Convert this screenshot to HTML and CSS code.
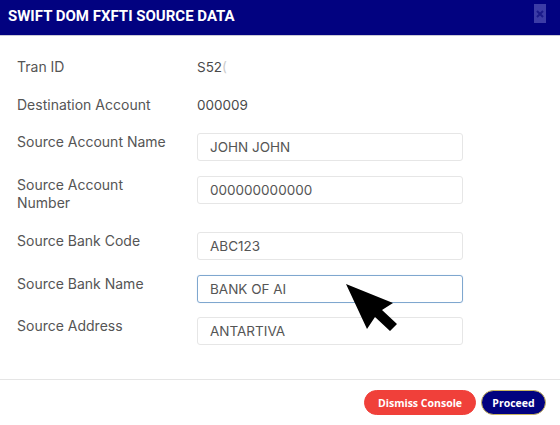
FILE: index.html
```html
<!DOCTYPE html>
<html>
<head>
<meta charset="utf-8">
<link rel="stylesheet" href="styles.css">
</head>
<body>
<div class="modal">
  <div class="modal-header">
    <h1 class="modal-title">SWIFT DOM FXFTI SOURCE DATA</h1>
    <button class="close-btn" aria-label="Close">
      <svg width="8" height="8" viewBox="0 0 8 8"><path d="M1 1L7 7M7 1L1 7" stroke="#1a1a8a" stroke-width="2"/></svg>
    </button>
  </div>
  <div class="modal-body">
    <div class="row text-row">
      <div class="label">Tran ID</div>
      <div class="value">S52<span class="faded">(</span></div>
    </div>
    <div class="row text-row last-text">
      <div class="label">Destination Account</div>
      <div class="value">000009</div>
    </div>
    <div class="row first-input">
      <div class="label">Source Account Name</div>
      <div class="input">JOHN JOHN</div>
    </div>
    <div class="row">
      <div class="label two">Source Account<br>Number</div>
      <div class="input">000000000000</div>
    </div>
    <div class="row wide-gap">
      <div class="label">Source Bank Code</div>
      <div class="input">ABC123</div>
    </div>
    <div class="row">
      <div class="label">Source Bank Name</div>
      <div class="input focused">BANK OF AI</div>
    </div>
    <div class="row">
      <div class="label">Source Address</div>
      <div class="input">ANTARTIVA</div>
    </div>
  </div>
  <div class="modal-footer">
    <button class="btn btn-dismiss">Dismiss Console</button>
    <button class="btn btn-proceed">Proceed</button>
  </div>
  <svg class="cursor" width="56" height="52" viewBox="0 0 56 52">
    <polygon points="0,0 47,19 36,26 51,40 44,47 29,33 21,45" fill="#000"/>
  </svg>
</div>
</body>
</html>
```
FILE: styles.css
```css
* { box-sizing: border-box; }
html, body { margin: 0; padding: 0; background: #fff; }
body { width: 560px; height: 425px; overflow: hidden; font-family: Inter, "Noto Sans", sans-serif; }
.modal { position: relative; width: 560px; height: 425px; display: flex; flex-direction: column; }
.modal-header {
  height: 36px; background: #020280; border-bottom: 1px solid #c9c9d6;
  display: flex; align-items: center; justify-content: space-between;
  padding: 0 14px 0 8px;
}
.modal-title {
  margin: 0; color: #fff; font-family: Roboto, "Liberation Sans", sans-serif;
  font-weight: 700; font-size: 15px; letter-spacing: 0; position: relative; top: -2px;
}
.close-btn {
  width: 12px; height: 19px; background: #3c3ca6; border: none; padding: 0;
  display: flex; align-items: center; justify-content: center; position: relative; top: -4px;
}
.modal-body { flex: 1; padding: 22px 0 0 17px; }
.row { display: flex; align-items: flex-start; margin-bottom: 14px; }
.text-row { margin-bottom: 20px; }
.text-row.last-text { margin-bottom: 19px; }
.row.first-input { margin-bottom: 15px; }
.row.wide-gap { margin-bottom: 15px; }
.label { width: 180px; color: #555; font-size: 14px; line-height: 18px; }
.label.two { margin-bottom: 6px; }
.value { color: #4a4a4a; font-size: 13.5px; line-height: 18px; }
.faded { color: #ccc; }
.input {
  width: 266px; height: 28px; border: 1px solid #e6e6e6; border-radius: 3px;
  padding: 0 12px; display: flex; align-items: center; color: #555; font-size: 13.5px;
}
.input.focused { border-color: #7fa7cf; box-shadow: 0 0 1px rgba(100,150,200,0.4); }
.modal-footer {
  height: 46px; border-top: 1px solid #e5e5e5;
  display: flex; justify-content: flex-end; align-items: center; gap: 5px;
  padding: 0 14px 0 0;
}
.btn {
  height: 25px; border-radius: 13px; font-family: "Open Sans", sans-serif;
  font-weight: 700; font-size: 10.5px; padding: 0 12px; color: #fff; cursor: pointer;
}
.btn-dismiss { background: #f0403a; border: 1px solid #f0403a; width: 112px; padding: 0; }
.btn-proceed { background: #020280; border: 1.5px solid #c8b560; width: 65px; padding: 0; }
.cursor { position: absolute; left: 346px; top: 284px; }
```
